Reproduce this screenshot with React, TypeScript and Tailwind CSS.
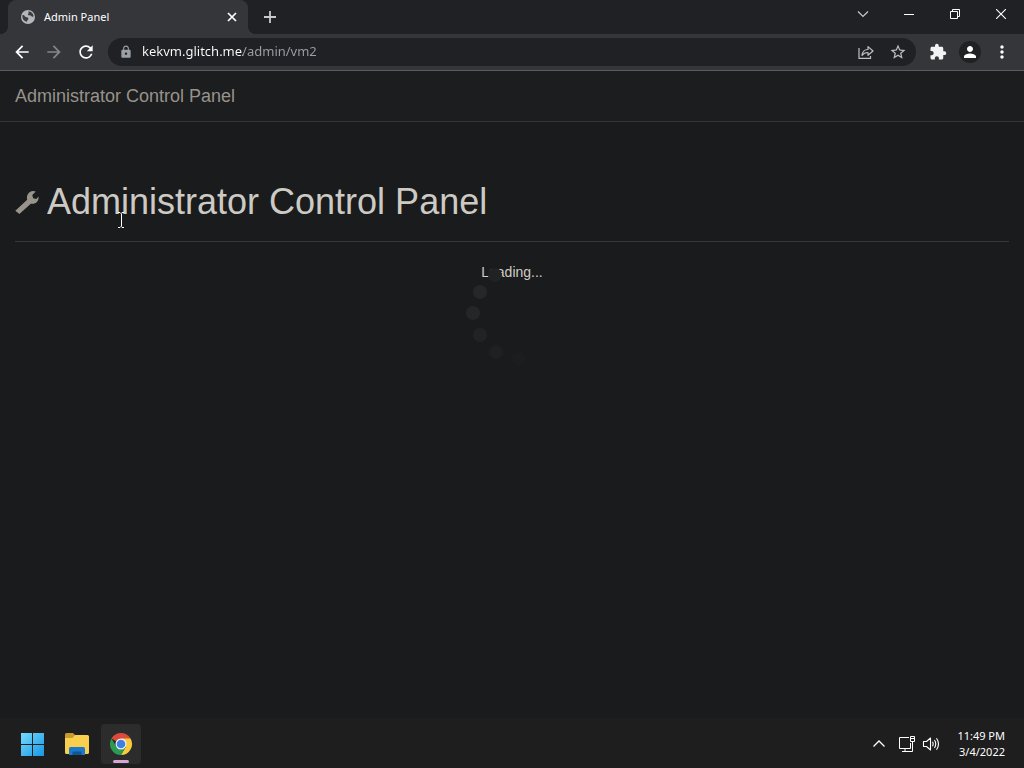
import React from 'react';
import {
  MdArrowBack,
  MdArrowForward,
  MdExtension,
  MdLock,
  MdMoreVert,
  MdPerson,
  MdRefresh,
  MdStarBorder
} from 'react-icons/md';

interface Dot {
  x: number;
  y: number;
  color: string;
}

const spinnerDots: Dot[] = [
  { x: 29, y: 7, color: '#202223' },
  { x: 14, y: 24, color: '#252728' },
  { x: 7, y: 45, color: '#242627' },
  { x: 14, y: 67, color: '#212324' },
  { x: 30, y: 84, color: '#1f2021' },
  { x: 53, y: 91, color: '#1b1d1e' }
];

function TabStrip() {
  return (
    <div className="flex h-[34px] items-stretch bg-[#202124] text-white">
      <div className="relative ml-2 flex w-60 items-center rounded-t-lg bg-[#35363a] pl-3 pr-2 before:absolute before:-left-2 before:bottom-0 before:size-2 before:bg-[radial-gradient(circle_at_0_0,transparent_8px,#35363a_8px)] after:absolute after:-right-2 after:bottom-0 after:size-2 after:bg-[radial-gradient(circle_at_100%_0,transparent_8px,#35363a_8px)]">
        <svg viewBox="0 0 16 16" className="size-4">
          <circle cx="8" cy="8" r="7" fill="#b4b6b9" />
          <path d="M2.500 6.200c1.200-.3 1.800.2 2.300 1.100.5 1 1.700.9 2.700 1.100 1.100.2 1.200 1.300.5 2-.7.600-.8 1.300-.9 2.400-3-.4-5.200-3.300-4.600-6.600zM8 2.400c1.400-.1 2.800.4 3.900 1.400 1 .9 1.600 2.200 1.700 3.700-1 .6-1.900.3-2.500-.5-.6-.7-1.500-.5-2.400-.7-.9-.3-.9-1.300-.3-1.900.6-.5.300-1.300-.4-2z" fill="#3c3d41" />
        </svg>
        <span className="ml-2 flex-1 text-[11px]">Admin Panel</span>
        <button aria-label="Close tab" className="flex size-4 items-center justify-center">
          <svg viewBox="0 0 16 16" className="size-4" stroke="currentColor" strokeWidth="1.7">
            <path d="M4 4l8 8M12 4l-8 8" />
          </svg>
        </button>
      </div>
      <button aria-label="New tab" className="ml-2 flex w-7 items-center justify-center">
        <svg viewBox="0 0 14 14" className="size-3.5" stroke="#c8cacd" strokeWidth="1.8">
          <path d="M7 1v12M1 7h12" />
        </svg>
      </button>
      <div className="ml-auto flex h-7">
        <button aria-label="Search tabs" className="flex w-[46px] items-center justify-center">
          <svg viewBox="0 0 12 12" className="size-3" fill="none" stroke="#c8cacd" strokeWidth="1.2">
            <path d="M1 3.5l5 5 5-5" />
          </svg>
        </button>
        <button aria-label="Minimize" className="flex w-[46px] items-center justify-center">
          <svg viewBox="0 0 10 10" className="size-2.5" stroke="currentColor">
            <path d="M0 5.5h10" />
          </svg>
        </button>
        <button aria-label="Restore" className="flex w-[46px] items-center justify-center">
          <svg viewBox="0 0 10 10" className="size-2.5" fill="none" stroke="currentColor">
            <path d="M.5 2.5h7v7h-7zM2.5 2.5v-2h7v7h-2" />
          </svg>
        </button>
        <button aria-label="Close" className="flex w-[46px] items-center justify-center">
          <svg viewBox="0 0 10 10" className="size-2.5" stroke="currentColor" strokeWidth="1.1">
            <path d="M0 0l10 10M10 0L0 10" />
          </svg>
        </button>
      </div>
    </div>
  );
}

function Toolbar() {
  return (
    <div className="flex h-[37px] items-center border-b border-[#5b5c5e] bg-[#35363a] px-2 text-white">
      <button aria-label="Back" className="flex size-7 items-center justify-center">
        <MdArrowBack className="size-5" />
      </button>
      <button aria-label="Forward" className="ml-1 flex size-7 items-center justify-center text-[#85868a]">
        <MdArrowForward className="size-5" />
      </button>
      <button aria-label="Reload" className="ml-1 flex size-7 items-center justify-center">
        <MdRefresh className="size-5" />
      </button>
      <div className="ml-2 flex h-7 flex-1 items-center rounded-full bg-[#202124] pl-2.5 pr-2 text-[#bdc1c6]">
        <span className="flex size-4 items-center justify-center text-[#9aa0a6]">
          <MdLock className="size-3.5" />
        </span>
        {/* Host is bright, the path behind it is dimmed */}
        <input
          aria-label="Address"
          type="text"
          defaultValue="kekvm.glitch.me/admin/vm2"
          className="ml-2 min-w-0 flex-1 bg-[linear-gradient(to_right,#ffffff_101px,#9aa0a6_101px)] bg-clip-text text-[13px] text-transparent outline-none"
        />
        <button aria-label="Share" className="flex w-5 items-center justify-center">
          <svg viewBox="0 0 16 16" className="size-4" fill="none" stroke="currentColor" strokeWidth="1.2">
            <path d="M1 4v10.4h11.5V12" />
            <path d="M4 11.5c.4-4 2.6-6 6-6V2.6l5 4.4-5 4.3V8.5c-2.700 0-4.500.8-6 3z" strokeLinejoin="round" />
          </svg>
        </button>
        <button aria-label="Bookmark this page" className="ml-3 flex w-5 items-center justify-center">
          <MdStarBorder className="size-[18px]" />
        </button>
      </div>
      <button aria-label="Extensions" className="ml-2 flex size-7 items-center justify-center text-[#f1f3f4]">
        <MdExtension className="size-[18px]" />
      </button>
      <button aria-label="Profile" className="ml-1 flex size-7 items-center justify-center">
        <span className="flex size-[22px] items-center justify-center rounded-full bg-[#202124]">
          <MdPerson className="size-[18px]" />
        </span>
      </button>
      <button aria-label="Menu" className="ml-1 flex size-7 items-center justify-center">
        <MdMoreVert className="size-5" />
      </button>
    </div>
  );
}

function AdminPage() {
  return (
    <div className="flex-1 bg-[#1a1b1c] font-['Liberation_Sans',Arial,sans-serif]">
      <nav className="flex h-[51px] items-center border-b border-[#353839] bg-[#1c1d1e] px-[15px]">
        <a href="#" className="text-lg text-[#97938c]">Administrator Control Panel</a>
      </nav>
      <main className="px-[15px] pt-[60px]">
        <div className="relative border-b border-[#353839] pb-[19px]">
          <h1 className="flex items-center gap-2 text-4xl text-[#cdcac4]">
            <svg viewBox="0 0 24 24" className="size-6" fill="#99948b">
              <path d="M.3 20.700L12.200 9.800C11 5.500 13.600 1.500 18 1l2.800.5L17.300 5l.8 3.200 3.200.8L23.600 6.500c.4 4.700-3.200 8.200-7.800 7.200L4.400 24z" />
            </svg>
            Administrator Control Panel
          </h1>
          <svg viewBox="0 0 8 16" className="absolute left-[102px] top-[30px] h-4 w-2" fill="none" stroke="#ffffff">
            <path d="M1 .5h2l1 1 1-1h2M4.500 1.500v13M1 15.500h2l1-1 1 1h2" />
          </svg>
        </div>
        <div className="relative pt-5 text-center text-sm text-[#d1cdc7]">
          <p>Loading...</p>
          <svg viewBox="0 0 92 100" className="absolute left-1/2 top-[26px] h-[100px] w-[92px] -translate-x-1/2">
            {spinnerDots.map(dot => (
              <circle key={dot.y} cx={dot.x} cy={dot.y} r="7" fill={dot.color} />
            ))}
          </svg>
        </div>
      </main>
    </div>
  );
}

function ChromeLogo() {
  return (
    <svg viewBox="0 0 24 24" className="size-6">
      <path d="M12 12L2.470 6.500A11 11 0 0 1 21.530 6.500z" fill="#dc4a3d" />
      <path d="M12 6.500h9.530A11 11 0 0 1 12 23l4.800-8.300z" fill="#f9cb3c" />
      <path d="M2.470 6.500l4.800 8.300L12 17.500l4.800-2.800L12 23A11 11 0 0 1 2.470 6.500z" fill="#2c9b52" />
      <circle cx="12" cy="12" r="5.500" fill="#f1f3f4" />
      <circle cx="12" cy="12" r="4.300" fill="#3f7fe0" />
    </svg>
  );
}

function Taskbar() {
  return (
    <footer className="flex h-[50px] items-center justify-between bg-[#1e1e1e] pt-1.5 pr-[19px] pb-1 pl-[13px] text-white">
      <div className="flex gap-1">
        <button aria-label="Start" className="flex size-10 items-center justify-center">
          <svg viewBox="0 0 24 24" className="size-6">
            <defs>
              <linearGradient id="start" x1="0" y1="0" x2="24" y2="24" gradientUnits="userSpaceOnUse">
                <stop stopColor="#77dcfb" />
                <stop offset="1" stopColor="#1495e6" />
              </linearGradient>
            </defs>
            <path d="M0 1h11v11H0zM12 1h11v11H12zM0 13h11v11H0zM12 13h11v11H12z" fill="url(#start)" />
          </svg>
        </button>
        <button aria-label="File Explorer" className="flex size-10 items-center justify-center">
          <svg viewBox="0 0 26 24" className="h-6 w-[26px]">
            <path d="M1 2.500Q1 1 2.500 1H9l2.500 2.500V8H1z" fill="#c99a2c" />
            <path d="M1 6h7.500L11 3h12.500Q25 3 25 4.500v16q0 1.500-1.500 1.500h-21Q1 22 1 20.500z" fill="#f8cf4e" />
            <path d="M5 23v-6.500Q5 15 6.500 15h13q1.500 0 1.500 1.500V23z" fill="#1c78c8" />
            <path d="M8.500 23v-2.500q0-1 1-1h7q1 0 1 1V23z" fill="#105596" />
          </svg>
        </button>
        <button aria-label="Google Chrome" className="relative flex size-10 items-center justify-center rounded bg-[#2c2c2c]">
          <ChromeLogo />
          <span className="absolute bottom-px left-3 h-[3px] w-4 rounded-full bg-[#d9a3d5]" />
        </button>
      </div>
      <div className="flex items-center">
        <button aria-label="Show hidden icons" className="flex w-6 items-center justify-center">
          <svg viewBox="0 0 14 14" className="size-3.5" fill="none" stroke="currentColor" strokeWidth="1.300">
            <path d="M1.500 9.500L7 4l5.500 5.500" />
          </svg>
        </button>
        <button aria-label="Network" className="ml-1.5 flex w-5 items-center justify-center">
          <svg viewBox="0 0 18 18" className="size-[18px]" fill="none" stroke="currentColor">
            <path d="M11 2.500H1.500v11h11V8M7 13.500v3M4 16.500h9.500M12.500 1.500h4v5h-4zM12.500 3.500h4M14.500 6.500v10h-3" />
          </svg>
        </button>
        <button aria-label="Volume" className="ml-1 flex w-5 items-center justify-center">
          <svg viewBox="0 0 18 18" className="size-[18px]" fill="none" stroke="currentColor" strokeWidth="1.100" strokeLinejoin="round">
            <path d="M1.500 6.500h3L8.500 3v12l-4-3.500h-3z" />
            <path d="M10.500 6.800q1.300 2.200 0 4.400M12.500 5q2.500 4 0 8M14.500 3.200q4 5.800 0 11.600" />
          </svg>
        </button>
        <time className="ml-4 text-right text-[11px] leading-4">
          11:49 PM
          <br />
          3/4/2022
        </time>
      </div>
    </footer>
  );
}

export default function App() {
  return (
    <div className="flex min-h-screen flex-col font-['Noto_Sans','Open_Sans',sans-serif]">
      <TabStrip />
      <Toolbar />
      <AdminPage />
      <Taskbar />
    </div>
  );
}
